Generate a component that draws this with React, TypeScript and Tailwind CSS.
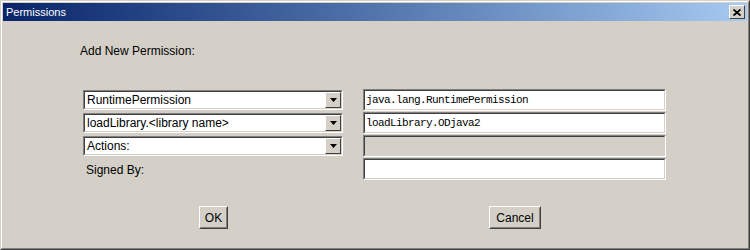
import React from "react";

const sans = { fontFamily: '"Liberation Sans", Arial, sans-serif' };
const mono = { fontFamily: '"Liberation Mono", "DejaVu Sans Mono", monospace' };

function Sunken({ children, disabled }: { children?: React.ReactNode; disabled?: boolean }) {
  return (
    <div className="h-[22px] border border-t-[#808080] border-l-[#808080] border-r-white border-b-white">
      <div
        className={`h-full border border-t-[#404040] border-l-[#404040] border-r-[#d4d0c8] border-b-[#d4d0c8] ${
          disabled ? "bg-[#d4d0c8]" : "bg-white"
        } flex items-center pl-[1px]`}
      >
        {children}
      </div>
    </div>
  );
}

function TextField({ value, disabled }: { value?: string; disabled?: boolean }) {
  return (
    <Sunken disabled={disabled}>
      <span className="text-[11px] tracking-[-0.6px] text-black leading-none" style={mono}>
        {value}
      </span>
    </Sunken>
  );
}

function Combo({ label }: { label: string }) {
  return (
    <div className="h-[20px] mt-[1px] border border-t-[#808080] border-l-[#808080] border-r-white border-b-white">
      <div className="h-full border border-t-[#404040] border-l-[#404040] border-r-[#d4d0c8] border-b-[#d4d0c8] bg-white flex items-center">
        <span className="flex-1 pl-[2px] text-[12px] text-black leading-none" style={sans}>
          {label}
        </span>
        <div className="w-[16px] h-full bg-[#d4d0c8] border border-t-white border-l-white border-r-[#404040] border-b-[#404040] flex items-center justify-center">
          <svg width="7" height="4" viewBox="0 0 7 4">
            <path d="M0 0h7L3.5 4z" fill="#000" />
          </svg>
        </div>
      </div>
    </div>
  );
}

function Button({ children, className }: { children: React.ReactNode; className?: string }) {
  return (
    <div
      className={`h-[23px] bg-[#d4d0c8] border border-t-white border-l-white border-r-[#404040] border-b-[#404040] ${className ?? ""}`}
    >
      <div className="h-full border border-transparent border-r-[#808080] border-b-[#808080] flex items-center justify-center text-[12px] text-black" style={sans}>
        {children}
      </div>
    </div>
  );
}

export default function App() {
  const fields = ["java.lang.RuntimePermission", "loadLibrary.ODjava2"];

  return (
    <div className="w-[750px] h-[250px] bg-[#d4d0c8] border border-t-[#d4d0c8] border-l-[#d4d0c8] border-r-[#404040] border-b-[#404040]" style={sans}>
      <div className="h-full border border-t-white border-l-white border-r-[#808080] border-b-[#808080] p-[1px] flex flex-col">
        {/* title bar */}
        <div className="h-[18px] flex items-center bg-gradient-to-r from-[#0a246a] to-[#a6caf0] pl-[3px] pr-[2px]">
          <span className="flex-1 text-white text-[11px] leading-none">Permissions</span>
          <div className="w-[16px] h-[14px] bg-[#d4d0c8] border border-t-white border-l-white border-r-[#404040] border-b-[#404040] flex items-center justify-center">
            <svg width="8" height="7" viewBox="0 0 8 7">
              <path d="M0.5 0.5l7 6M7.5 0.5l-7 6" stroke="#000" strokeWidth="1.8" />
            </svg>
          </div>
        </div>

        {/* body */}
        <div className="flex-1 flex flex-col">
          <div className="mt-[23px] ml-[77px] text-[12px] leading-[14px] text-black">Add New Permission:</div>

          <div className="mt-[31px] grid grid-cols-[260px_303px] gap-x-[20px] ml-[80px]">
            <div className="flex flex-col">
              <div className="h-[23px]">
                <Combo label="RuntimePermission" />
              </div>
              <div className="h-[23px]">
                <Combo label="loadLibrary.<library name>" />
              </div>
              <div className="h-[23px]">
                <Combo label="Actions:" />
              </div>
              <div className="h-[23px] flex items-center pl-[3px] text-[12px] text-black">Signed By:</div>
            </div>
            <div className="flex flex-col gap-[1px]">
              {fields.map((f) => (
                <TextField key={f} value={f} />
              ))}
              <TextField disabled />
              <TextField />
            </div>
          </div>

          <div className="mt-[25px] flex">
            <Button className="ml-[196px] w-[29px]">OK</Button>
            <Button className="ml-[261px] w-[52px]">Cancel</Button>
          </div>
        </div>
      </div>
    </div>
  );
}
